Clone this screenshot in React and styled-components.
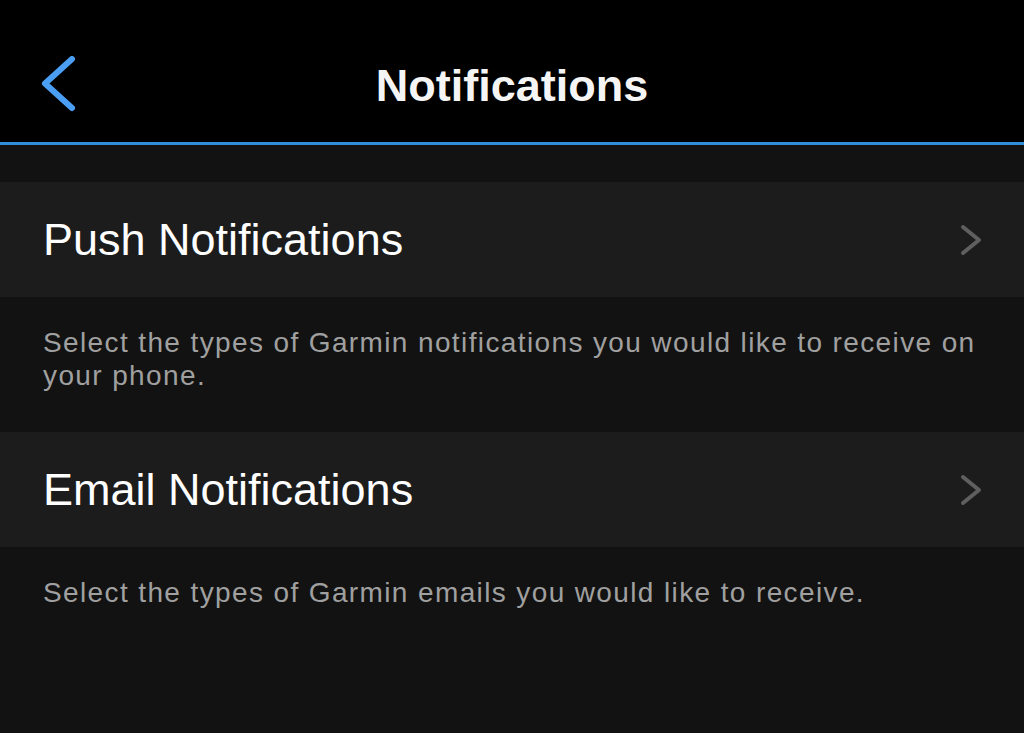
import styled, { createGlobalStyle } from "styled-components"

const GlobalStyle = createGlobalStyle`
    html, body {
        margin: 0;
        padding: 0;
        background-color: #121212;
    }
    * {
        box-sizing: border-box;
    }
`

const items = [
    {
        title: "Push Notifications",
        text: "Select the types of Garmin notifications you would like to receive on your phone."
    },
    {
        title: "Email Notifications",
        text: "Select the types of Garmin emails you would like to receive."
    }
]

export default function App() {
    return (
        <>
            <GlobalStyle />
            <Page>
                <Header>
                    <BackButton aria-label="Back">
                        <svg width="38" height="56" viewBox="0 0 38 56">
                            <polyline points="33,3 6,27.5 33,52" fill="none" stroke="#4a9ff5" strokeWidth="6" strokeLinecap="round" strokeLinejoin="round" />
                        </svg>
                    </BackButton>
                    <Title>Notifications</Title>
                    <span />
                </Header>
                <Spacer />
                {items.map((item) =>
                    <Section key={item.title}>
                        <Row>
                            <RowTitle>{item.title}</RowTitle>
                            <svg width="24" height="36" viewBox="0 0 24 36">
                                <polyline points="4,5 20,18 4,31" fill="none" stroke="#5f5f5f" strokeWidth="4" strokeLinecap="round" strokeLinejoin="round" />
                            </svg>
                        </Row>
                        <Description>{item.text}</Description>
                    </Section>
                )}
            </Page>
        </>
    )
}

const Page = styled.div`
    width: 1024px;
    min-height: 733px;
    background-color: #121212;
    font-family: "Liberation Sans", Arial, sans-serif;
`

const Header = styled.div`
    height: 145px;
    display: grid;
    grid-template-columns: 1fr auto 1fr;
    align-items: center;
    padding: 29px 39px 0 39px;
    background-color: #000000;
    border-bottom: 3px solid #2f8fd8;
`

const BackButton = styled.div`
    display: flex;
    align-items: center;
    margin-bottom: 4px;
    cursor: pointer;
`

const Title = styled.div`
    font-size: 45px;
    font-weight: 700;
    color: #f5f5f5;
`

const Spacer = styled.div`
    height: 37px;
`

const Section = styled.div`
    display: flex;
    flex-direction: column;
`

const Row = styled.div`
    height: 115px;
    display: flex;
    align-items: center;
    justify-content: space-between;
    padding: 0 41px 0 43px;
    background-color: #1c1c1c;
    cursor: pointer;
`

const RowTitle = styled.div`
    font-size: 45px;
    color: #ffffff;
`

const Description = styled.div`
    padding: 29px 40px 40px 43px;
    font-size: 28px;
    line-height: 33px;
    letter-spacing: 1.38px;
    color: #a0a0a0;
`
